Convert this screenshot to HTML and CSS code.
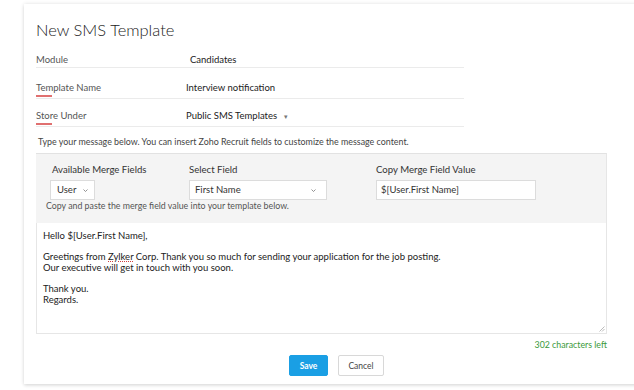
FILE: index.html
```html
<!DOCTYPE html>
<html>
<head>
<meta charset="utf-8">
<link rel="stylesheet" href="styles.css">
</head>
<body>
<div class="card">
  <h1 class="title">New SMS Template</h1>
  <div class="fields">
    <div class="row row-module">
      <div class="label">Module</div>
      <div class="value value-module">Candidates</div>
    </div>
    <div class="row row-name">
      <div class="label mandatory">Template Name</div>
      <div class="value">Interview notification</div>
    </div>
    <div class="row row-store">
      <div class="label mandatory">Store Under</div>
      <div class="value">Public SMS Templates <span class="caret">&#9662;</span></div>
    </div>
  </div>
  <p class="hint">Type your message below. You can insert Zoho Recruit fields to customize the message content.</p>
  <div class="merge">
    <div class="merge-cols">
      <div class="col col-avail">
        <div class="col-label">Available Merge Fields</div>
        <div class="select select-user">User<svg class="chev" width="5" height="3" viewBox="0 0 5 3"><path d="M0.5 0.5 L2.5 2.5 L4.5 0.5" stroke="#777" stroke-width="0.8" fill="none"/></svg></div>
      </div>
      <div class="col col-field">
        <div class="col-label">Select Field</div>
        <div class="select select-field">First Name<svg class="chev" width="5" height="3" viewBox="0 0 5 3"><path d="M0.5 0.5 L2.5 2.5 L4.5 0.5" stroke="#777" stroke-width="0.8" fill="none"/></svg></div>
      </div>
      <div class="col col-copy">
        <div class="col-label">Copy Merge Field Value</div>
        <div class="copy-input">$[User.First Name]</div>
      </div>
    </div>
    <div class="merge-note">Copy and paste the merge field value into your template below.</div>
  </div>
  <div class="editor">
    <p>Hello $[User.First Name],</p>
    <p class="gap">Greetings from <span class="spell">Zylker</span> Corp. Thank you so much for sending your application for the job posting.<br>Our executive will get in touch with you soon.</p>
    <p class="gap">Thank you.<br>Regards.</p>
    <svg class="grip" width="6" height="6" viewBox="0 0 6 6"><path d="M5.5 0.5 L0.5 5.5 M5.5 3 L3 5.5" stroke="#aaa" stroke-width="0.8" fill="none"/></svg>
  </div>
  <div class="counter">302 characters left</div>
  <div class="actions">
    <button class="btn btn-save">Save</button>
    <button class="btn btn-cancel">Cancel</button>
  </div>
</div>
</body>
</html>
```
FILE: styles.css
```css
html, body {
  margin: 0;
  padding: 0;
  background: #ffffff;
}
body {
  font-family: Lato, "Open Sans", sans-serif;
  color: #333;
  width: 634px;
  height: 390px;
  overflow: hidden;
}
.card {
  margin: 4px 0 0 24px;
  width: 620px;
  height: 380px;
  box-sizing: border-box;
  padding: 16px 0 0 12px;
  background: #fff;
  box-shadow: 0 0 4px rgba(0,0,0,0.12), 0 2px 3px rgba(0,0,0,0.08);
}
.title {
  margin: 0;
  font-size: 16.5px;
  font-weight: 300;
  color: #222;
  line-height: 20px;
  height: 19px;
}
.fields {
  width: 428px;
}
.row {
  display: flex;
  border-bottom: 1px solid #ebebeb;
  align-items: flex-end;
  font-size: 9.5px;
  line-height: 12px;
  box-sizing: content-box;
}
.row-module {
  height: 27px;
  padding-bottom: 1px;
}
.row-name {
  height: 26px;
  padding-bottom: 4px;
}
.row-store {
  height: 23px;
  padding-bottom: 4px;
}
.label {
  width: 150px;
  color: #555;
  position: relative;
}
.mandatory::after {
  content: "";
  position: absolute;
  left: 0;
  bottom: -3px;
  width: 16px;
  height: 2px;
  background: #e07070;
}
.value {
  color: #222;
}
.value-module {
  padding-left: 4px;
}
.caret {
  font-size: 7px;
  color: #777;
  margin-left: 4px;
}
.hint {
  margin: 9px 0 0 2px;
  font-size: 8.9px;
  color: #444;
  line-height: 12px;
}
.merge {
  margin-top: 5px;
  width: 571px;
  height: 70px;
  box-sizing: border-box;
  background: #f4f4f4;
  border-top: 1px solid #e2e2e2;
  border-right: 1px solid #e6e6e6;
  padding: 10px 0 0 10px;
}
.merge-cols {
  display: flex;
}
.col-label {
  font-size: 9.6px;
  color: #333;
  line-height: 12px;
  height: 16px;
}
.col-avail { width: 143px; }
.col-field { width: 187px; }
.col-avail .col-label { margin-left: 6px; }
.select, .copy-input {
  height: 20px;
  box-sizing: border-box;
  background: #fff;
  border: 1px solid #dcdcdc;
  font-size: 9.5px;
  line-height: 18px;
  color: #333;
  padding-left: 6px;
  position: relative;
}
.select-user {
  width: 45px;
  margin-left: 4px;
}
.select-field {
  width: 138px;
  padding-left: 5px;
}
.copy-input {
  width: 160px;
  padding-left: 4px;
}
.chev {
  position: absolute;
  right: 6px;
  top: 8px;
}
.select-field .chev {
  right: 10px;
}
.merge-note {
  font-size: 8.8px;
  color: #555;
  margin-top: 0;
  line-height: 12px;
}
.editor {
  width: 571px;
  height: 111px;
  box-sizing: border-box;
  border: 1px solid #e6e6e6;
  border-top: none;
  padding: 7px 0 0 6px;
  font-size: 9.5px;
  line-height: 11px;
  color: #222;
  position: relative;
}
.editor p {
  margin: 0;
}
.editor .gap {
  margin-top: 10px;
}
.spell {
  text-decoration: underline dotted #d04040;
  text-decoration-thickness: 1px;
  text-underline-offset: 1px;
}
.grip {
  position: absolute;
  right: 1px;
  bottom: 1px;
}
.counter {
  width: 571px;
  text-align: right;
  font-size: 8.8px;
  color: #3a9a3a;
  margin-top: 5px;
  line-height: 11px;
}
.actions {
  display: flex;
  justify-content: center;
  gap: 10px;
  width: 620px;
  margin-top: 5px;
  box-sizing: border-box;
  padding-right: 19px;
}
.btn {
  height: 21px;
  font-family: Lato, "Open Sans", sans-serif;
  font-size: 8.5px;
  border-radius: 2px;
  padding: 0;
  cursor: pointer;
}
.btn-save {
  width: 39px;
  background: #1a9fe4;
  color: #fff;
  border: 1px solid #1a9fe4;
  font-weight: 700;
}
.btn-cancel {
  width: 46px;
  background: #fff;
  color: #444;
  border: 1px solid #d8d8d8;
}
```
